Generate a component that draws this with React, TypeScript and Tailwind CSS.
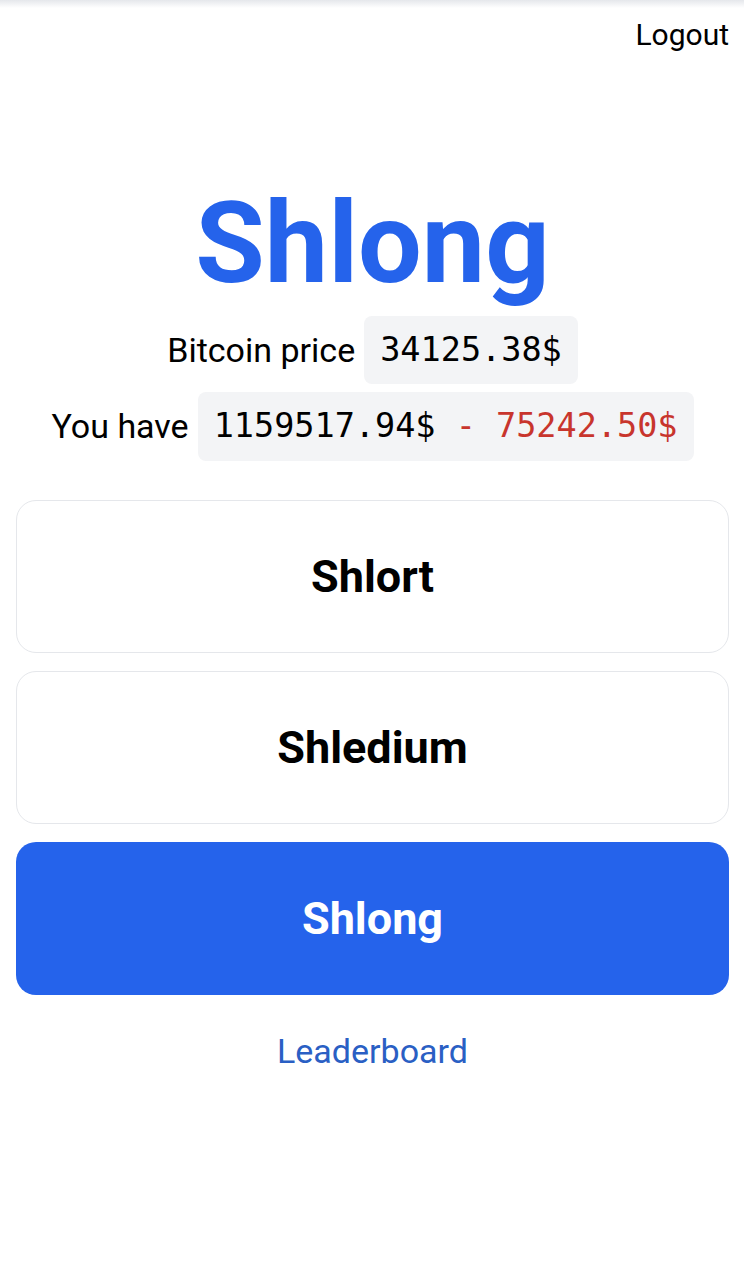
export default function App() {
  return (
    <div
      className="relative min-h-[1280px] w-full bg-white text-black"
      style={{ fontFamily: 'Roboto, "Liberation Sans", sans-serif' }}
    >
      <div className="absolute inset-x-0 top-0 h-[8px] bg-gradient-to-b from-gray-200 to-white" />

      <div className="pt-[17px] pl-4 pr-[15px]">
        <div className="flex justify-end">
          <button className="text-[30px] leading-[36px]">Logout</button>
        </div>

        <h1 className="mt-[134px] text-center text-[113px] font-bold leading-none text-[#2563eb]">
          Shlong
        </h1>

        <div className="mt-[16px] flex flex-col items-center gap-2">
          <div className="flex items-center gap-[9px]">
            <span className="text-[34px]">Bitcoin price</span>
            <code className="flex h-[68px] items-center rounded-lg bg-gray-100 px-4 font-['DejaVu_Sans_Mono',monospace] text-[33.5px]">
              34125.38$
            </code>
          </div>
          <div className="flex items-center gap-[9px]">
            <span className="text-[34px]">You have</span>
            <code className="flex h-[69px] items-center whitespace-pre rounded-lg bg-gray-100 px-4 font-['DejaVu_Sans_Mono',monospace] text-[33.5px]">
              1159517.94$<span className="text-[#c8352d]"> - 75242.50$</span>
            </code>
          </div>
        </div>

        <div className="mt-[39px] flex flex-col gap-[18px]">
          <button className="h-[153px] rounded-[20px] border border-gray-200 bg-white text-[45px] font-bold">
            Shlort
          </button>
          <button className="h-[153px] rounded-[20px] border border-gray-200 bg-white text-[45px] font-bold">
            Shledium
          </button>
          <button className="h-[153px] rounded-[20px] bg-[#2563eb] text-[45px] font-bold text-white">
            Shlong
          </button>
        </div>

        <div className="mt-[31px] flex justify-center">
          <a className="text-[34px] leading-[1.5] text-[#2a5fc4]">Leaderboard</a>
        </div>
      </div>
    </div>
  );
}
